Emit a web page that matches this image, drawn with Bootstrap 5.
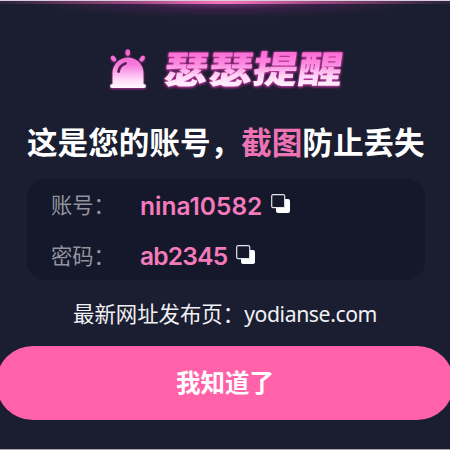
<!DOCTYPE html>
<html lang="zh-CN">
<head>
<meta charset="utf-8">
<meta name="viewport" content="width=device-width, initial-scale=1">
<title>瑟瑟提醒</title>
<link href="https://cdn.jsdelivr.net/npm/bootstrap@5.3.0/dist/css/bootstrap.min.css" rel="stylesheet">
<style>
body{background:#1a1e30;font-family:"Noto Sans CJK SC",sans-serif;color:#fff}
.dialog{width:450px;height:450px;background:#1a1e30;border-top:1px solid #d9cddf;border-bottom:1px solid #a9a9b6}
.glow{height:19px;background:
 linear-gradient(90deg,rgba(240,105,175,.08),rgba(240,105,175,.6) 33%,#f274b6 50%,rgba(240,105,175,.6) 67%,rgba(240,105,175,.08)) top/100% 3px no-repeat,
 radial-gradient(ellipse 200px 17px at 50% 0,rgba(125,60,125,.95),rgba(80,34,88,.5) 50%,transparent)}
.title-row{height:60px;margin-top:19px;padding-left:110px}
.siren{width:36px;height:40px;margin-top:10px;filter:drop-shadow(0 1px 1px #b32c92);overflow:visible}
.title-glow{filter:drop-shadow(0 0 1px #c03ba0) drop-shadow(0 1px 1px #b32c92);margin:-2px 0 0 18px}
.title-text{font-size:37.5px;font-weight:900;line-height:60px;width:154px;white-space:nowrap;transform-origin:0 50%;transform:scaleX(1.195) skewX(-7deg);background:linear-gradient(#fb66d3 22%,#fb8de0 46%,#ffd2f6 64%,#fff0fd 80%);-webkit-background-clip:text;background-clip:text;color:transparent}
.headline{font-size:30.6px;font-weight:700;line-height:44px;margin-top:20px;padding-left:27px;white-space:nowrap}
.pink{color:#ed73b4}
.account{width:398px;height:101px;margin:16px 0 0 27px;border-radius:18px;background:#15172b;padding-left:24px}
.account-row{height:50.5px}
.field{width:89px;font-size:21.3px;color:#92939d;line-height:30px}
.value{font-family:Inter,sans-serif;font-weight:600;font-size:24.5px;line-height:30px;padding-top:3px;color:#f47bbb}
.value.short{letter-spacing:-.75px}
.copy{width:20px;height:20px;margin-left:9px}
.release{font-size:21.4px;line-height:30px;margin-top:18px;padding-left:73px;white-space:nowrap;color:#f1f1f5}
.domain{font-family:"Noto Sans",sans-serif;font-size:21.2px;letter-spacing:-.4px}
.btn.confirm{width:458px;height:74px;margin:17px 0 0 -4px;background:#ff62a8;color:#fff;font-size:24.5px;font-weight:700;border:0;padding:0 0 1px}
</style>
</head>
<body class="overflow-hidden">
<main class="dialog overflow-hidden">
<div class="glow"></div>
<div class="title-row d-flex align-items-start">
<svg class="siren flex-shrink-0" viewBox="0 0 36 40" preserveAspectRatio="none" aria-hidden="true">
<defs><linearGradient id="sg" gradientUnits="userSpaceOnUse" x1="0" y1="0" x2="0" y2="40"><stop offset="0" stop-color="#ef60ca"/><stop offset=".4" stop-color="#f87bdd"/><stop offset=".75" stop-color="#ffd6f7"/><stop offset="1" stop-color="#fff"/></linearGradient></defs>
<g fill="url(#sg)"><path d="M2.500 35V24a15.500 15.500 0 0 1 31 0v11h.5a2 2 0 0 1 0 4H2a2 2 0 0 1 0-4z"/><ellipse cx="17.800" cy="3.500" rx="2.300" ry="3.300"/><ellipse cx="3.500" cy="9.600" rx="2.200" ry="3.200" transform="rotate(-38 3.500 9.600)"/><ellipse cx="32.200" cy="9.600" rx="2.200" ry="3.200" transform="rotate(38 32.200 9.600)"/></g>
<path d="M8.500 22.500Q9.500 16.500 15.500 14.500" fill="none" stroke="#54204f" stroke-width="2.800" stroke-linecap="round"/>
</svg>
<div class="title-glow"><div class="title-text">瑟瑟提醒</div></div>
</div>
<h1 class="headline mb-0">这是您的账号，<span class="pink">截图</span>防止丢失</h1>
<section class="account">
<div class="account-row d-flex align-items-center"><span class="field">账号：</span><span class="value">nina10582</span>
<svg class="copy" viewBox="0 0 20 20"><rect x="5" y="5" width="14" height="14" rx="2" fill="#fff"/><rect x=".7" y=".7" width="13" height="13" rx="1.500" fill="#15172b" stroke="#e5e5ec" stroke-width="1.200"/></svg></div>
<div class="account-row d-flex align-items-center"><span class="field">密码：</span><span class="value short">ab2345</span>
<svg class="copy" viewBox="0 0 20 20"><rect x="5" y="5" width="14" height="14" rx="2" fill="#fff"/><rect x=".7" y=".7" width="13" height="13" rx="1.500" fill="#15172b" stroke="#e5e5ec" stroke-width="1.200"/></svg></div>
</section>
<p class="release mb-0">最新网址发布页：<span class="domain">yodianse.com</span></p>
<button type="button" class="btn confirm rounded-pill">我知道了</button>
</main>
<script src="https://cdn.jsdelivr.net/npm/bootstrap@5.3.0/dist/js/bootstrap.bundle.min.js"></script>
</body>
</html>
